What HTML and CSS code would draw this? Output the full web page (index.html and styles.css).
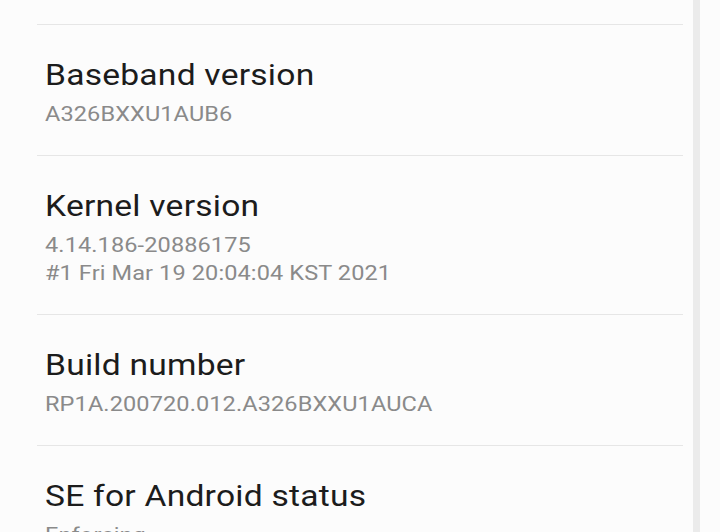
FILE: index.html
```html
<!DOCTYPE html>
<html lang="en">
<head>
<meta charset="utf-8">
<title>Software information</title>
<link rel="stylesheet" href="styles.css">
</head>
<body>
<div class="screen">
  <main class="list">
    <div class="spacer"></div>
    <section class="item">
      <div class="text">
        <h2 class="title">Baseband version</h2>
        <p class="summary">A326BXXU1AUB6</p>
      </div>
    </section>
    <section class="item">
      <div class="text">
        <h2 class="title">Kernel version</h2>
        <p class="summary">4.14.186-20886175<br>#1 Fri Mar 19 20:04:04 KST 2021</p>
      </div>
    </section>
    <section class="item">
      <div class="text">
        <h2 class="title">Build number</h2>
        <p class="summary">RP1A.200720.012.A326BXXU1AUCA</p>
      </div>
    </section>
    <section class="item">
      <div class="text">
        <h2 class="title">SE for Android status</h2>
        <p class="summary">Enforcing</p>
      </div>
    </section>
  </main>
  <div class="scrollbar"></div>
</div>
</body>
</html>
```
FILE: styles.css
```css
html, body {
  margin: 0;
  height: 100%;
  background: #fcfcfc;
  overflow: hidden;
}

.screen {
  display: flex;
  height: 100%;
  font-family: Roboto, "Liberation Sans", sans-serif;
}

.list {
  flex: 1;
  padding: 0 10px 0 37px;
}

.spacer {
  height: 24px;
}

.item {
  border-top: 1px solid #e6e6e6;
  padding: 32px 8px 27px 8px;
}

.text {
  transform: scaleX(1.12);
  transform-origin: left center;
}

.title {
  margin: 0;
  font-size: 30px;
  line-height: 36px;
  font-weight: 400;
  letter-spacing: 0.2px;
  color: #1c1c1c;
}

.summary {
  margin: 7px 0 0;
  font-size: 21px;
  line-height: 28px;
  letter-spacing: 0.1px;
  color: #8a8a8a;
}

.scrollbar {
  width: 7px;
  margin-right: 20px;
  background: #ebebeb;
}
```
